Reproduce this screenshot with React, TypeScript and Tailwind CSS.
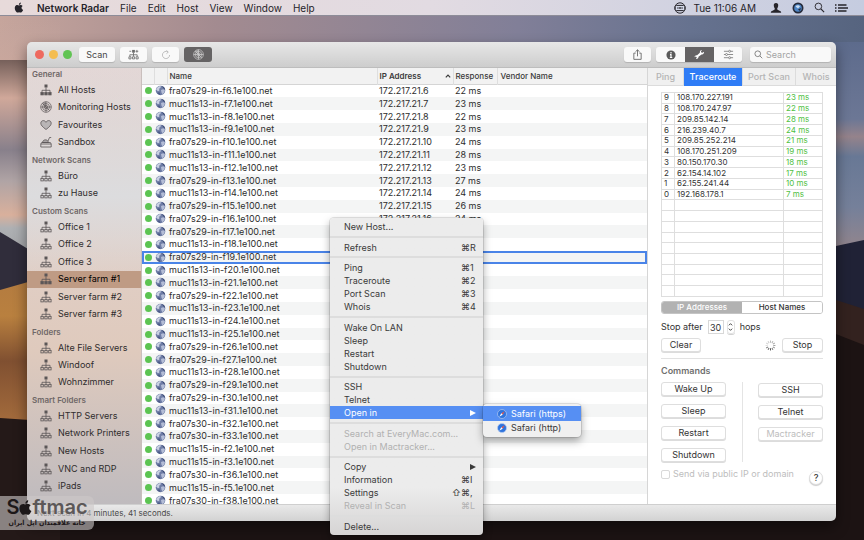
import React from "react";

const scans: [string, string, string][] = [
  ["fra07s29-in-f6", "172.217.21.6", "22 ms"],
  ["muc11s13-in-f7", "172.217.21.7", "23 ms"],
  ["muc11s13-in-f8", "172.217.21.8", "22 ms"],
  ["muc11s13-in-f9", "172.217.21.9", "23 ms"],
  ["fra07s29-in-f10", "172.217.21.10", "24 ms"],
  ["muc11s13-in-f11", "172.217.21.11", "28 ms"],
  ["muc11s13-in-f12", "172.217.21.12", "23 ms"],
  ["fra07s29-in-f13", "172.217.21.13", "27 ms"],
  ["muc11s13-in-f14", "172.217.21.14", "24 ms"],
  ["fra07s29-in-f15", "172.217.21.15", "26 ms"],
  ["fra07s29-in-f16", "172.217.21.16", "24 ms"],
  ["fra07s29-in-f17", "", ""],
  ["muc11s13-in-f18", "", ""],
  ["fra07s29-in-f19", "", ""],
  ["muc11s13-in-f20", "", ""],
  ["muc11s13-in-f21", "", ""],
  ["fra07s29-in-f22", "", ""],
  ["muc11s13-in-f23", "", ""],
  ["muc11s13-in-f24", "", ""],
  ["muc11s13-in-f25", "", ""],
  ["fra07s29-in-f26", "", ""],
  ["fra07s29-in-f27", "", ""],
  ["muc11s13-in-f28", "", ""],
  ["fra07s29-in-f29", "", ""],
  ["fra07s29-in-f30", "", ""],
  ["muc11s13-in-f31", "", ""],
  ["fra07s30-in-f32", "", ""],
  ["fra07s30-in-f33", "", ""],
  ["muc11s15-in-f2", "", ""],
  ["muc11s15-in-f3", "", ""],
  ["fra07s30-in-f36", "", ""],
  ["muc11s15-in-f5", "", ""],
  ["fra07s30-in-f38", "", ""],
];

const hops: [string, string, string][] = [
  ["9", "108.170.227.191", "23 ms"],
  ["8", "108.170.247.97", "22 ms"],
  ["7", "209.85.142.14", "28 ms"],
  ["6", "216.239.40.7", "24 ms"],
  ["5", "209.85.252.214", "21 ms"],
  ["4", "108.170.251.209", "19 ms"],
  ["3", "80.150.170.30", "18 ms"],
  ["2", "62.154.14.102", "17 ms"],
  ["1", "62.155.241.44", "10 ms"],
  ["0", "192.168.178.1", "7 ms"],
];
const emptyHops = Array.from({ length: 9 }, () => ["\u00a0", "", ""] as [string, string, string]);

function AppleLogo({ className }: { className: string }) {
  return (
    <svg viewBox="3 1 18 22" className={className} fill="currentColor" aria-hidden="true">
      <path d="M17.1 12.7c0-2.5 2-3.7 2.1-3.8-1.2-1.700-3-1.900-3.600-1.900-1.500-.2-3 .9-3.800.9s-2-.9-3.200-.9C6.900 7 5.300 8 4.400 9.500c-1.800 3.100-.5 7.700 1.300 10.200.9 1.200 1.900 2.600 3.200 2.500 1.300 0 1.800-.8 3.300-.8s2 .8 3.400.8c1.400 0 2.300-1.200 3.100-2.500 1-1.400 1.400-2.800 1.400-2.900-.1 0-3-1.100-3-4.100zM14.700 5.300c.7-.8 1.200-2 1-3.200-1 0-2.200.7-2.900 1.500-.6.700-1.200 1.900-1 3 1.100.1 2.200-.5 2.900-1.300z" />
    </svg>
  );
}

function Sitemap({ solid, className }: { solid?: boolean; className: string }) {
  return (
    <svg viewBox="0 0 12 12" className={className} fill="none" stroke="currentColor" aria-hidden="true">
      <rect x="4.500" y="0.500" width="3" height="3" fill="currentColor" stroke="none" />
      <path d="M6 3.500V8M2 8V6.300h8V8" strokeWidth="0.8" />
      {[0.9, 4.800, 8.700].map((x) => (
        <rect key={x} x={x} y="8.500" width="2.400" height="2.400" strokeWidth="0.8" fill={solid ? "currentColor" : "none"} />
      ))}
    </svg>
  );
}

function Radar({ className }: { className: string }) {
  return (
    <svg viewBox="0 0 12 12" className={className} fill="none" stroke="currentColor" strokeWidth="0.7" aria-hidden="true">
      <circle cx="6" cy="6" r="5.300" />
      <circle cx="6" cy="6" r="3.500" />
      <circle cx="6" cy="6" r="1.700" />
      <path d="M6 .7v10.600M.7 6h10.600M6 6 2.300 2.300M6 6l3.700 3.700" />
      <path d="M6 6 2.300 2.300A5.300 5.300 0 0 1 6 .7z" fill="currentColor" fillOpacity="0.4" stroke="none" />
    </svg>
  );
}

function Heart({ className }: { className: string }) {
  return (
    <svg viewBox="0 0 12 12" className={className} fill="#b9b5b6" stroke="currentColor" strokeWidth="0.8" aria-hidden="true">
      <path d="M6 10.500C2.500 7.800.8 6.200.8 4.200.8 2.700 1.900 1.600 3.300 1.600c1.100 0 2.100.6 2.700 1.700.6-1.100 1.600-1.700 2.700-1.700 1.400 0 2.500 1.100 2.500 2.600 0 2-1.700 3.600-5.200 6.300z" />
    </svg>
  );
}

function Sandbox({ className }: { className: string }) {
  return (
    <svg viewBox="0 0 12 12" className={className} fill="none" stroke="currentColor" strokeWidth="0.8" aria-hidden="true">
      <path d="M1.600 6.500h8.800l.8 1.500v3H.8V8zM.8 8h10.400M8 5l1.500-3.500h1.700" />
      <path d="M2.500 6.500C2.700 4.500 4.300 3.800 5.500 3.800s2.600.8 2.900 2.700z" fill="currentColor" fillOpacity="0.4" />
    </svg>
  );
}

function Globe({ className }: { className: string }) {
  return (
    <svg viewBox="0 0 12 12" className={className} aria-hidden="true">
      <circle cx="6" cy="6" r="5.200" fill="#6f7da6" />
      <path d="M1.200 5C2 2.500 4 1 6.300 1L6 3 4.500 4l.3 2-1.600.8z" fill="#c9d0e2" />
      <path d="M6.500 5.500 9 4.500l1.800 1.300-.8 2.700-2 1.500-1-2z" fill="#b4bdd6" />
      <path d="M7.500 1.200c2 .6 3.300 2 3.600 4L9 3.600z" fill="#3c4a74" />
      <path d="M2.500 8.500 5 8l1 2.800C4.500 10.900 3.200 10 2.500 8.500z" fill="#4c5b88" />
    </svg>
  );
}

function Compass({ className }: { className: string }) {
  return (
    <svg viewBox="0 0 12 12" className={className} aria-hidden="true">
      <circle cx="6" cy="6" r="5.400" fill="#2f74dd" stroke="#b9cdf0" strokeWidth="0.8" />
      <path d="M9.300 2.700 6.800 6.800 5.200 5.200z" fill="#e8574a" />
      <path d="M2.700 9.300 6.800 6.800 5.200 5.200z" fill="#fff" />
    </svg>
  );
}

type IconType = (p: { className: string; solid?: boolean }) => React.ReactElement;
type Item = { label: string; icon?: IconType; solid?: boolean; active?: boolean };

const groups: { title: string; size: string; items: Item[] }[] = [
  {
    title: "General",
    size: "h-[70px]",
    items: [
      { label: "All Hosts", solid: true },
      { label: "Monitoring Hosts", icon: Radar },
      { label: "Favourites", icon: Heart },
      { label: "Sandbox", icon: Sandbox },
    ],
  },
  { title: "Network Scans", size: "h-[35px]", items: [{ label: "Büro" }, { label: "zu Hause" }] },
  {
    title: "Custom Scans",
    size: "h-[105px]",
    items: [
      { label: "Office 1" },
      { label: "Office 2" },
      { label: "Office 3" },
      { label: "Server farm #1", active: true, solid: true },
      { label: "Server farm #2" },
      { label: "Server farm #3" },
    ],
  },
  {
    title: "Folders",
    size: "h-[52px]",
    items: [{ label: "Alte File Servers" }, { label: "Windoof" }, { label: "Wohnzimmer" }],
  },
  {
    title: "Smart Folders",
    size: "h-[88px]",
    items: [
      { label: "HTTP Servers" },
      { label: "Network Printers" },
      { label: "New Hosts" },
      { label: "VNC and RDP" },
      { label: "iPads" },
    ],
  },
];

function Wallpaper() {
  return (
    <svg
      className="absolute inset-0 h-full w-full"
      viewBox="0 0 864 540"
      preserveAspectRatio="none"
      aria-hidden="true"
    >
      <defs>
        <linearGradient id="top" x1="0" x2="1">
          <stop offset="0" stopColor="#c6a59c" />
          <stop offset="0.25" stopColor="#a38b90" />
          <stop offset="0.6" stopColor="#817f98" />
          <stop offset="0.8" stopColor="#66728f" />
          <stop offset="1" stopColor="#56647f" />
        </linearGradient>
        <linearGradient id="left" x1="0" x2="0" y1="0" y2="1">
          <stop offset="0" stopColor="#c7aaa2" stopOpacity="0" />
          <stop offset="0.3" stopColor="#d0a89a" />
          <stop offset="0.5" stopColor="#88808b" />
          <stop offset="0.62" stopColor="#b0a4a5" />
          <stop offset="0.75" stopColor="#d9b09c" />
          <stop offset="0.8" stopColor="#aeb0b3" />
          <stop offset="1" stopColor="#999a9d" />
        </linearGradient>
        <linearGradient id="right" x1="0" x2="0" y1="0" y2="1">
          <stop offset="0" stopColor="#5d6b8c" />
          <stop offset="0.35" stopColor="#6c7795" />
          <stop offset="0.43" stopColor="#95838b" />
          <stop offset="0.52" stopColor="#687895" />
          <stop offset="0.75" stopColor="#75809a" />
          <stop offset="1" stopColor="#9c8788" />
        </linearGradient>
        <linearGradient id="dune" x1="0" x2="0" y1="0" y2="1">
          <stop offset="0" stopColor="#b27a40" />
          <stop offset="0.3" stopColor="#b9803f" />
          <stop offset="0.6" stopColor="#805031" />
          <stop offset="1" stopColor="#a36b3c" />
        </linearGradient>
      </defs>
      <rect width="864" height="540" fill="#1c1313" />
      <rect width="864" height="60" fill="url(#top)" />
      <rect y="20" width="60" height="260" fill="url(#left)" />
      <rect x="800" y="42" width="64" height="220" fill="url(#right)" />
      <path d="M0 232 10 238 28 249 60 262V290H0z" fill="#302d3b" />
      <path d="M0 290 28 282 60 271V421H0z" fill="url(#dune)" />
      <path d="M0 418 60 422V540H0z" fill="#241918" />
      <path d="M800 256 836 246 864 240V315H800z" fill="#202236" />
      <path d="M800 292 836 300 864 309V360H800z" fill="#33221f" />
      <path d="M800 320 864 345V540H800z" fill="#1c1313" />
    </svg>
  );
}

function MenuBar() {
  return (
    <header className="relative flex h-4 items-center border-b border-[#8d8c98] bg-linear-to-r from-[#e7dada] via-[#e2dbe2] to-[#c5cce0] pr-4 pl-[14px] text-[10px] leading-4 text-[#26242a]">
      <nav className="flex items-center gap-[11px]" aria-label="Menu bar">
        <AppleLogo className="mr-[2px] h-[11px] w-[10px]" />
        <button className="font-semibold">Network Radar</button>
        {["File", "Edit", "Host", "View", "Window", "Help"].map((m) => (
          <button key={m}>{m}</button>
        ))}
      </nav>
      <div className="ml-auto flex items-center gap-[10px]">
        <div className="mr-1 flex items-center gap-[7px]">
          <svg viewBox="0 0 12 12" className="h-3 w-3" fill="none" stroke="currentColor" aria-hidden="true">
            <circle cx="6" cy="6" r="5.200" strokeWidth="1" />
            <rect x="1.200" y="3.400" width="9.600" height="5.200" rx="1.200" fill="#d3d8e8" strokeWidth="1" />
            <path d="M3 6h1.700M7.300 6H9M5.400 5.200v1.600M6.600 5.200v1.600" strokeWidth="0.900" />
          </svg>
          <time>Tue 11:06 AM</time>
        </div>
        <svg viewBox="0 0 12 12" className="h-3 w-3" fill="currentColor" aria-hidden="true">
          <path d="M6 1c1.600 0 2.400 1.100 2.200 2.700C8 5 7.500 6 7.200 6.500c0 1 .4 1.500 1.800 2 1.500.5 2.200 1 2.200 2.300H.8C.8 9.500 1.500 9 3 8.500c1.400-.5 1.800-1 1.800-2C4.500 6 4 5 3.800 3.700 3.600 2.100 4.400 1 6 1z" />
        </svg>
        <svg viewBox="0 0 12 12" className="h-3 w-3" aria-hidden="true">
          <circle cx="6" cy="6" r="5.500" fill="#252a3a" />
          <circle cx="6" cy="6" r="3.800" fill="#4d84c4" />
          <path d="M3.500 4.500C5 2.500 7 3 8 4.500L6 6.500z" fill="#c9dcf0" />
          <path d="M6 7.500 9 6 8 9z" fill="#252a3a" />
        </svg>
        <svg viewBox="0 0 12 12" className="h-[11px] w-[11px]" fill="none" stroke="currentColor" aria-hidden="true">
          <circle cx="4.800" cy="4.800" r="3.600" strokeWidth="1" />
          <path d="M7.500 7.500 11 11" strokeWidth="1.300" />
        </svg>
        <svg viewBox="0 0 13 10" className="h-[10px] w-[13px]" stroke="currentColor" strokeWidth="1.400" aria-hidden="true">
          <path d="M0 2h1.500M3 2h8.500M0 5h1.500M3 5h10M0 8h1.500M3 8h8.500" />
        </svg>
      </div>
    </header>
  );
}

const toolButton = "flex h-[15px] items-center justify-center rounded-[3px] bg-[#f9f9f9] text-[#6a6a6a] shadow-[0_1px_1px_rgba(0,0,0,0.15)]";

function Toolbar() {
  return (
    <div className="flex h-[26px] items-center rounded-t-[5px] border-b border-[#bdbdbd] bg-linear-to-b from-[#e7e7e7] to-[#cdcdcd] pr-[5px] pl-2">
      <div className="flex gap-[5px]">
        <button aria-label="Close" className="size-[9px] rounded-full bg-[#ee6a5f]" />
        <button aria-label="Minimise" className="size-[9px] rounded-full bg-[#f4bd50]" />
        <button aria-label="Zoom" className="size-[9px] rounded-full bg-[#61c454]" />
      </div>
      <div className="ml-[7px] flex gap-[5px]">
        <button className={toolButton + " w-9 text-[9px] text-[#484848]"}>Scan</button>
        <button aria-label="Add scan" className={toolButton + " w-[27px]"}>
          <svg viewBox="0 0 12 12" className="h-[11px] w-[11px]" fill="none" stroke="currentColor" aria-hidden="true">
            <path d="M4.500 1h3v3h-3z" fill="currentColor" stroke="none" />
            <path d="M9.700 1v3M8.200 2.500h3M1.500 2.500h2M6 4v4M2 8V6.300h8V8" strokeWidth="0.9" />
            <path d="M1 8.500h2.300v2.300H1zM4.900 8.500h2.300v2.300H4.900zM8.800 8.500h2.300v2.300H8.800z" strokeWidth="0.9" />
          </svg>
        </button>
        <button aria-label="Refresh" className={toolButton + " w-[27px]"}>
          <svg viewBox="0 0 12 12" className="h-[10px] w-[10px] text-[#b5b5b5]" fill="none" stroke="currentColor" strokeWidth="1" aria-hidden="true">
            <path d="M8.500 2.500A4.300 4.300 0 1 0 10.300 6M6.500.5l2.200 2-2.200 2" />
          </svg>
        </button>
        <button aria-label="Monitor" className="flex h-[15px] w-7 items-center justify-center rounded-[3px] bg-[#656364] text-[#d8d8d8]">
          <Radar className="h-[11px] w-[11px]" />
        </button>
      </div>
      <div className="ml-auto flex items-center gap-[5px]">
        <button aria-label="Share" className={toolButton + " w-[27px]"}>
          <svg viewBox="0 0 12 12" className="h-[11px] w-[11px]" fill="none" stroke="currentColor" strokeWidth="1" aria-hidden="true">
            <path d="M4 4.500H2v6.800h8V4.500H8M6 8V1M3.800 3 6 .9 8.200 3" />
          </svg>
        </button>
        <div className="flex overflow-hidden rounded-[3px] shadow-[0_1px_1px_rgba(0,0,0,0.15)]">
          <button aria-label="Information" className="flex h-[15px] w-[29px] items-center justify-center bg-[#f9f9f9]">
            <svg viewBox="0 0 12 12" className="h-[10px] w-[10px]" aria-hidden="true">
              <circle cx="6" cy="6" r="5.500" fill="#5b5b5b" />
              <path d="M6 2.500v1.600M4.800 5.500H6v3.500M4.600 9h2.900" stroke="#fff" strokeWidth="1.400" fill="none" />
            </svg>
          </button>
          <button aria-label="Tools" className="flex h-[15px] w-[29px] items-center justify-center bg-[#656364] text-white">
            <svg viewBox="0 0 12 12" className="h-[11px] w-[11px]" fill="currentColor" aria-hidden="true">
              <path d="M8.800 1 7.600 2.400l.3 1.400 1.400.3L10.800 3c.5 1.500-.7 3.200-2.600 2.900L4.900 8.500C5.100 10 3.600 11.300 2 10.800l1-1.200-.3-1-1-.3-1 .7C.4 7.600 1.700 6.400 3.400 6.800l3-2.700C6.200 2.300 7.200.9 8.800 1z" />
            </svg>
          </button>
          <button aria-label="Options" className="flex h-[15px] w-7 items-center justify-center bg-[#f9f9f9] text-[#777]">
            <svg viewBox="0 0 12 12" className="h-[11px] w-[11px]" fill="none" stroke="currentColor" strokeWidth="0.9" aria-hidden="true">
              <path d="M1 2.500h5M8.500 2.500H11M1 6h1.500M5 6h6M1 9.500h5M8.500 9.500H11" />
              <circle cx="7.200" cy="2.500" r="1.100" />
              <circle cx="3.800" cy="6" r="1.100" />
              <circle cx="7.200" cy="9.500" r="1.100" />
            </svg>
          </button>
        </div>
        <label className="ml-[3px] flex h-[15px] w-[81px] items-center gap-[3px] rounded-[3px] bg-[#f9f9f9] px-1 text-[#7a7a7a] shadow-[0_1px_1px_rgba(0,0,0,0.15)]">
          <svg viewBox="0 0 12 12" className="h-[9px] w-[9px] shrink-0" fill="none" stroke="currentColor" strokeWidth="1.200" aria-hidden="true">
            <circle cx="5" cy="5" r="3.800" />
            <path d="M7.800 7.800 11 11" />
          </svg>
          <input aria-label="Search" placeholder="Search" className="w-full min-w-0 bg-transparent text-[9px] leading-3 outline-none placeholder:text-[#a3a3a3]" />
        </label>
      </div>
    </div>
  );
}

function Sidebar() {
  return (
    <aside className="w-[115px] shrink-0 overflow-hidden border-r border-[#c9bfbd] bg-linear-to-b from-[#e3d7d6] via-[#dfcabd] via-65% to-[#bfbbbe]">
      <div className="-mt-[3px] flex h-full flex-col bg-linear-to-b from-transparent via-[#dcdcde] via-30% to-transparent to-50%">
        {groups.map((g) => (
          <section key={g.title}>
            <h2 className="h-4 pt-[3px] pl-[5px] text-[8px] leading-3 font-semibold text-[#6f6868]">{g.title}</h2>
            <ul className={"flex flex-col " + g.size}>
              {g.items.map((it) => {
                const Icon = it.icon ?? Sitemap;
                return (
                  <li key={it.label} className="flex min-h-0 flex-1">
                    <button
                      className={
                        "flex w-full items-center gap-[6px] pl-[13px] text-[9px] leading-3 text-[#2f2c2d] " +
                        (it.active ? "bg-[#bf9b84]" : "")
                      }
                    >
                      <Icon solid={it.solid} className="h-3 w-3 shrink-0 text-[#5b5657]" />
                      <span className={it.active ? "text-black" : ""}>{it.label}</span>
                    </button>
                  </li>
                );
              })}
            </ul>
          </section>
        ))}
      </div>
    </aside>
  );
}

function HostTable() {
  return (
    <div className="h-[436px] min-w-0 flex-1 overflow-hidden bg-white">
      <table className="h-[439px] w-full table-fixed border-collapse text-left text-[9px] leading-3 text-[#2d2d2d]">
        <colgroup>
          <col className="w-3" />
          <col className="w-[13px]" />
          <col className="w-[210px]" />
          <col className="w-[76px]" />
          <col className="w-[44px]" />
          <col />
        </colgroup>
        <thead>
          <tr className="h-4 border-b border-[#d5d5d5] bg-[#f2f2f2] text-[8px] text-[#3a3a3a]">
            <td className="border-r border-[#dedede] p-0" />
            <td className="border-r border-[#dedede] p-0" />
            <th className="border-r border-[#dedede] py-0 pr-0 pl-[2px] font-medium">Name</th>
            <th className="border-r border-[#dedede] px-[2px] py-0 font-semibold">
              <span className="flex items-center justify-between">
                IP Address
                <svg viewBox="0 0 6 4" className="h-1 w-[6px]" fill="none" stroke="currentColor" strokeWidth="1.200" aria-hidden="true">
                  <path d="M.8 3.300 3 1l2.200 2.300" />
                </svg>
              </span>
            </th>
            <th className="border-r border-[#dedede] py-0 pr-0 pl-[2px] font-medium">Response</th>
            <th className="py-0 pr-0 pl-[3px] font-medium">Vendor Name</th>
          </tr>
        </thead>
        <tbody>
          {scans.map(([name, ip, ms]) => (
            <tr
              key={name}
              className={
                "odd:bg-white even:bg-[#f4f5f5] " +
                (name === "fra07s29-in-f19" ? "outline-2 -outline-offset-2 outline-[#4a84e8]" : "")
              }
            >
              <td className="p-0">
                <span className="ml-[3px] block size-[7px] rounded-full bg-[#5cc452]" />
              </td>
              <td className="p-0">
                <Globe className="ml-[1px] h-[11px] w-[11px]" />
              </td>
              <td className="py-0 pr-0 pl-[2px]">{name}.1e100.net</td>
              <td className="py-0 pr-0 pl-[2px]">{ip}</td>
              <td className="py-0 pr-0 pl-[2px]">{ms}</td>
              <td className="p-0" />
            </tr>
          ))}
        </tbody>
      </table>
    </div>
  );
}

const pushButton = "h-[14px] rounded-[3px] border border-[#dedede] bg-white text-[9px] leading-3 shadow-[0_1px_0_#dcdcdc]";

function Inspector() {
  return (
    <section className="flex w-[189px] shrink-0 flex-col border-l border-[#d6d6d6] bg-white text-[9px] leading-3 text-[#333]">
      <div className="flex h-[18px] divide-x divide-[#dcdcdc] border-b border-[#dcdcdc] bg-[#f0f0f0] font-medium text-[#b4b4b4]" role="tablist">
        <button role="tab" className="w-9">Ping</button>
        <button role="tab" aria-selected="true" className="-mb-px w-[59px] bg-[#2f7cf6] text-white">Traceroute</button>
        <button role="tab" className="w-[53px]">Port Scan</button>
        <button role="tab" className="flex-1">Whois</button>
      </div>
      <div className="flex flex-col px-[13px] pt-[6px]">
        <table className="h-[205px] w-full table-fixed border-collapse text-left text-[8px] leading-[9px]">
          <colgroup>
            <col className="w-[13px]" />
            <col />
            <col className="w-[39px]" />
          </colgroup>
          <tbody>
            {[...hops, ...emptyHops].map(([n, ip, ms], i) => (
              <tr key={i}>
                <td className="border border-[#dedede] py-0 pr-0 pl-[2px]">{n}</td>
                <td className="border border-[#dedede] py-0 pr-0 pl-[2px]">{ip}</td>
                <td className="border border-[#dedede] py-0 pr-0 pl-[2px] text-[#4fc03f]">{ms}</td>
              </tr>
            ))}
          </tbody>
        </table>
        <div className="mt-[4px] flex h-[13px] overflow-hidden rounded-[3px] border border-[#c4c4c4] text-[8px] leading-[11px] font-medium">
          <button className="flex-1 bg-[#b2b2b2] text-white">IP Addresses</button>
          <button className="flex-1 bg-white">Host Names</button>
        </div>
        <div className="mt-[6px] flex h-[14px] items-center">
          <label htmlFor="hops">Stop after</label>
          <input id="hops" defaultValue="30" className="ml-[5px] h-[14px] w-4 border border-[#d8d8d8] text-center text-[9px] outline-none" />
          <button aria-label="Change hop count" className="ml-[3px] flex h-[14px] w-2 items-center justify-center rounded-[3px] border border-[#e2e2e2] shadow-[0_1px_0_#d2d2d2]">
            <svg viewBox="0 0 6 12" className="h-[10px] w-[5px] shrink-0" fill="none" stroke="currentColor" strokeWidth="1.100" aria-hidden="true">
              <path d="M1 4l2-2 2 2M1 8l2 2 2-2" />
            </svg>
          </button>
          <span className="ml-[5px]">hops</span>
        </div>
        <div className="mt-[4px] flex items-center justify-between">
          <button className={pushButton + " w-10"}>Clear</button>
          <div className="flex items-center gap-[6px]">
            <svg viewBox="0 0 12 12" className="h-[11px] w-[11px]" stroke="#555" strokeWidth="1.100" aria-label="Running">
              {[1, 0.9, 0.75, 0.2, 0.25, 0.3, 0.4, 0.45, 0.5, 0.55, 0.6, 0.8].map((o, i) => (
                <path key={i} d="M6 3V.6" opacity={o} transform={`rotate(${180 + i * 30} 6 6)`} />
              ))}
            </svg>
            <button className={pushButton + " w-[41px]"}>Stop</button>
          </div>
        </div>
        <hr className="mt-[6px] border-[#e2e2e2]" />
        <h2 className="mt-[6px] font-semibold text-[#6f6f6f]">Commands</h2>
        <div className="mt-[5px] flex justify-between">
          <div className="flex flex-col gap-2">
            {["Wake Up", "Sleep", "Restart", "Shutdown"].map((c) => (
              <button key={c} className={pushButton + " w-[65px]"}>{c}</button>
            ))}
          </div>
          <div className="w-px bg-[#e4e4e4]" />
          <div className="flex flex-col gap-2 pt-[1px]">
            <button className={pushButton + " w-[65px]"}>SSH</button>
            <button className={pushButton + " w-[65px]"}>Telnet</button>
            <button disabled className={pushButton + " w-[65px] text-[#bdbdbd]"}>Mactracker</button>
          </div>
        </div>
        <div className="mt-[4px] flex items-start justify-between">
          <label className="flex h-4 items-center gap-[3px] whitespace-nowrap text-[#bdbdbd]">
            <input type="checkbox" disabled className="size-[9px] appearance-none rounded-[2px] border border-[#d9d9d9] bg-white" />
            Send via public IP or domain
          </label>
          <button aria-label="Help" className="mt-[5px] size-[14px] rounded-full border border-[#dedede] bg-white text-[9px] leading-3 font-medium shadow-[0_1px_1px_#cccccc]">?</button>
        </div>
      </div>
    </section>
  );
}

type MenuRow = { label: string; mod?: string; k?: string; sub?: boolean; off?: boolean; on?: boolean };
const menu: (MenuRow | null)[] = [
  { label: "New Host..." },
  null,
  { label: "Refresh", mod: "⌘", k: "R" },
  null,
  { label: "Ping", mod: "⌘", k: "1" },
  { label: "Traceroute", mod: "⌘", k: "2" },
  { label: "Port Scan", mod: "⌘", k: "3" },
  { label: "Whois", mod: "⌘", k: "4" },
  null,
  { label: "Wake On LAN" },
  { label: "Sleep" },
  { label: "Restart" },
  { label: "Shutdown" },
  null,
  { label: "SSH" },
  { label: "Telnet" },
  { label: "Open in", sub: true, on: true },
  null,
  { label: "Search at EveryMac.com...", off: true },
  { label: "Open in Mactracker...", off: true },
  null,
  { label: "Copy", sub: true },
  { label: "Information", mod: "⌘", k: "I" },
  { label: "Settings", mod: "⇧⌘", k: "," },
  { label: "Reveal in Scan", mod: "⌘", k: "L", off: true },
  null,
  { label: "Delete..." },
];

function ContextMenu() {
  return (
    <>
      <div
        role="menu"
        className="absolute top-[176px] left-[303px] flex h-[317px] w-[153px] flex-col rounded-[4px] bg-linear-to-b from-[#ececec] from-85% to-[#d6d4d4] py-[2px] text-[9px] shadow-[0_0_0_1px_rgba(0,0,0,0.1),0_4px_9px_rgba(0,0,0,0.35)]"
      >
        {menu.map((m, i) =>
          m === null ? (
            <div key={i} role="separator" className="flex flex-1 items-center">
              <div className="h-[2px] w-full bg-[#dddddd]" />
            </div>
          ) : (
            <button
              key={i}
              role="menuitem"
              disabled={m.off}
              className={
                "flex h-[13px] shrink-0 items-center pr-[5px] pl-[14px] text-left leading-[13px] " +
                (m.on ? "bg-[#568ff3] text-white" : m.off ? "text-[#b1b1b1]" : "text-[#3a3a3a]")
              }
            >
              <span className="flex-1 whitespace-nowrap">{m.label}</span>
              {m.mod && <span className="font-['Inter','DejaVu_Sans',sans-serif]">{m.mod}</span>}
              {m.k && <span className="w-2">{m.k}</span>}
              {m.sub && (
                <svg viewBox="0 0 6 6" className="mr-[2px] h-[6px] w-[6px]" fill="currentColor" aria-hidden="true">
                  <path d="M0 0 6 3 0 6z" />
                </svg>
              )}
            </button>
          ),
        )}
      </div>
      <div
        role="menu"
        className="absolute top-[362px] left-[456px] flex w-[98px] flex-col rounded-[4px] bg-[#f0f0f0] py-[2px] text-[9px] text-[#3a3a3a] shadow-[0_0_0_1px_rgba(0,0,0,0.1),0_4px_9px_rgba(0,0,0,0.35)]"
      >
        <button role="menuitem" className="flex h-[15px] items-center gap-1 bg-[#568ff3] pl-[14px] text-white">
          <Compass className="h-[10px] w-[10px]" />
          Safari (https)
        </button>
        <button role="menuitem" className="flex h-[14px] items-center gap-1 pl-[14px]">
          <Compass className="h-[10px] w-[10px]" />
          Safari (http)
        </button>
      </div>
    </>
  );
}

export default function App() {
  return (
    <div className="relative flex min-h-screen flex-col overflow-hidden font-['Inter','Liberation_Sans',sans-serif]">
      <Wallpaper />
      <MenuBar />
      <main className="relative mt-[26px] mr-7 mb-[19px] ml-[27px] rounded-[5px] shadow-[0_6px_14px_rgba(0,0,0,0.45)]">
        <Toolbar />
        <div className="flex">
          <Sidebar />
          <HostTable />
          <Inspector />
        </div>
        <footer className="h-[17px] rounded-b-[5px] border-t border-[#cfcfcf] bg-linear-to-b from-[#e9e9e9] to-[#d2d2d2] pl-[10px] text-[8px] leading-4 text-[#4a4a4a]">
          Next scan in 4 minutes, 41 seconds.
        </footer>
        <ContextMenu />
      </main>
      <div className="absolute bottom-[10px] left-0 flex h-[34px] w-[94px] flex-col items-center rounded-r-[6px] bg-[rgba(205,200,200,0.6)] text-[#1d1819]">
        <div className="flex h-[22px] items-center text-[20px] leading-[22px] font-semibold">
          S
          <AppleLogo className="h-[17px] w-[13px]" />
          <span className="text-[#5c5858]">ftmac</span>
        </div>
        <div dir="rtl" lang="fa" className="text-[7px] leading-[11px] font-bold whitespace-nowrap font-['DejaVu_Sans_Condensed','DejaVu_Sans',sans-serif]">
          خانه علاقمندان اپل ایران
        </div>
      </div>
    </div>
  );
}
